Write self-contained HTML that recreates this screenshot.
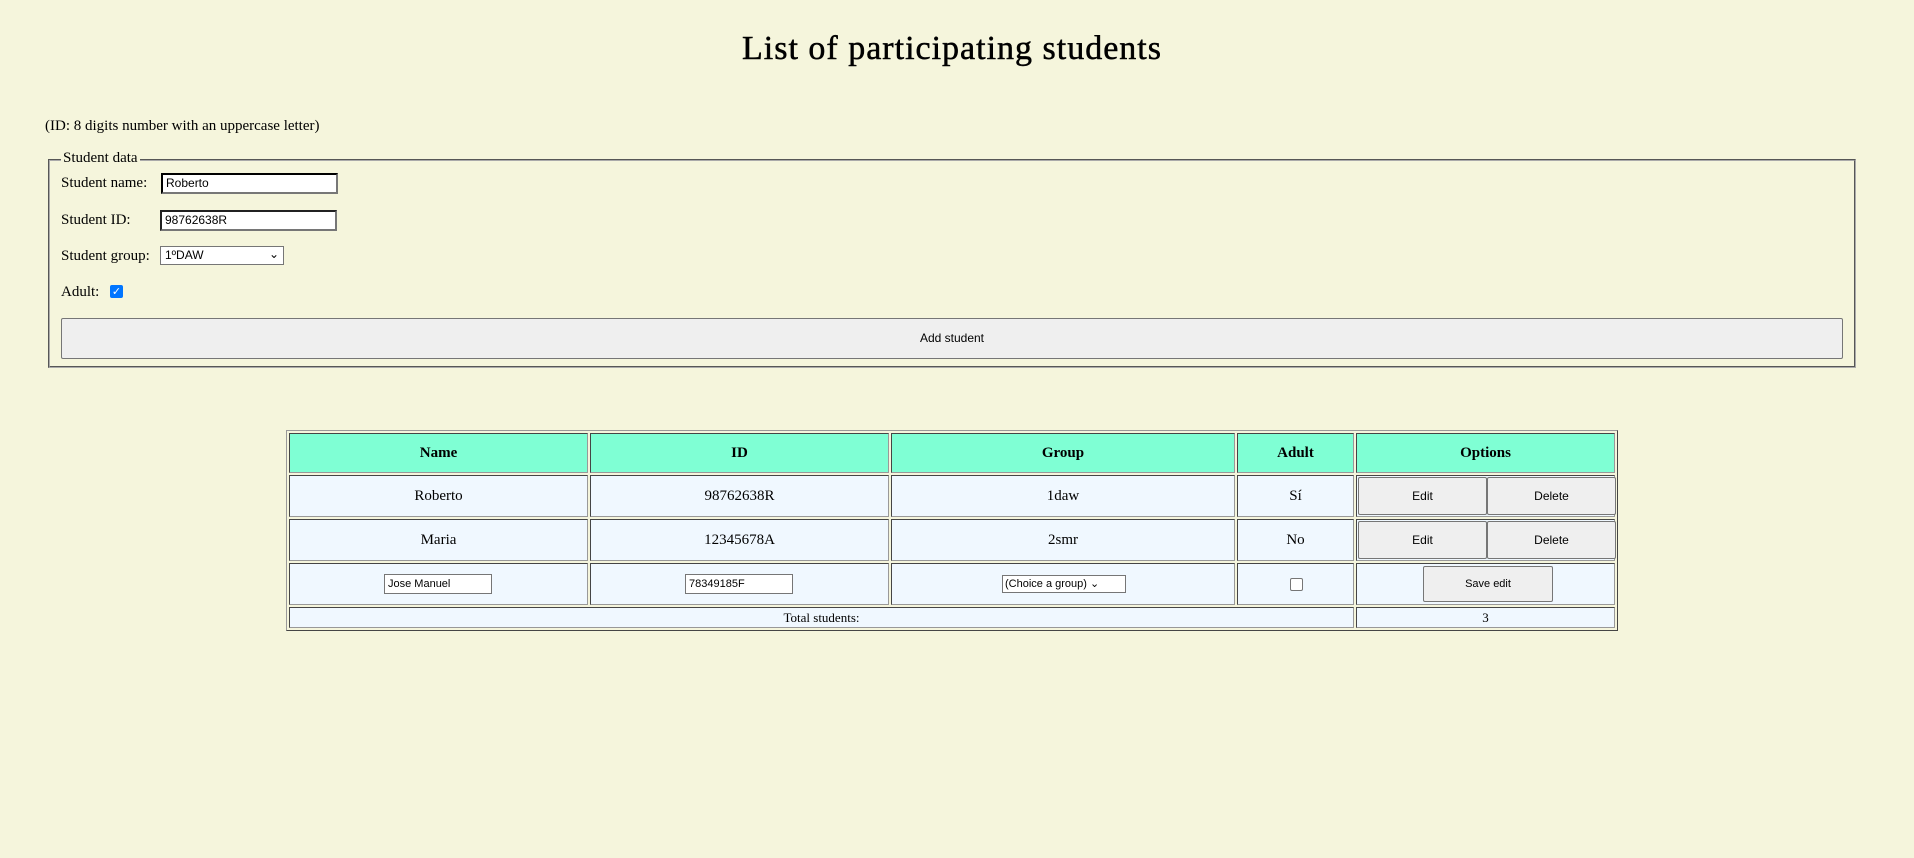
<!DOCTYPE html>
<html><head><meta charset="utf-8">
<style>
body{margin:0;background:#f5f5dc;font-family:"Liberation Serif",serif;font-size:15px;color:#000;width:1914px;height:858px;overflow:hidden;position:relative}
h1{position:absolute;top:30px;left:0;width:1904px;text-align:center;margin:0;font-size:34px;font-weight:normal;letter-spacing:1px;-webkit-text-stroke:0.5px #000}
.abs{position:absolute}
.in{position:absolute;height:21px;border:2px inset #767676;background:#fff;padding:1px 3px;font-family:"Liberation Sans",sans-serif;font-size:12px;box-sizing:border-box;line-height:15px;text-align:left}
.btn{position:absolute;background:#efefef;border:1px solid #767676;border-radius:2px;box-sizing:border-box;font-family:"Liberation Sans",sans-serif;font-size:12px;text-align:center}
table{position:absolute;left:286px;top:430px;width:1332px;border:1px outset #999;border-spacing:2px;border-collapse:separate;font-size:15px}
td,th{border:1px inset #999;text-align:center;padding:0;background:#f0f8ff}
th{background:#7fffd4;height:38px;font-weight:bold}
td{height:40px;position:relative}
</style></head><body>
<h1>List of participating students</h1>
<div class="abs" style="left:45px;top:118px">(ID: 8 digits number with an uppercase letter)</div>
<div class="abs" style="left:48px;top:159px;width:1808px;height:209px;border:2px groove #aaa;box-sizing:border-box"></div>
<div class="abs" style="left:61px;top:150px;background:#f5f5dc;padding:0 2px">Student data</div>
<div class="abs" style="left:61px;top:175px">Student name:</div>
<div class="in" style="left:161px;top:173px;width:177px;border-color:#222 #777 #777 #222">Roberto</div>
<div class="abs" style="left:61px;top:212px">Student ID:</div>
<div class="in" style="left:160px;top:210px;width:177px">98762638R</div>
<div class="abs" style="left:61px;top:248px">Student group:</div>
<div class="in" style="left:160px;top:246px;width:124px;height:19px;border:1px solid #767676;padding:1px 4px">1ºDAW<span style="position:absolute;right:4px;top:0">&#8964;</span></div>
<div class="abs" style="left:61px;top:284px">Adult:</div>
<div class="abs" style="left:110px;top:285px;width:13px;height:13px;background:#0075ff;border-radius:2px;color:#fff;font-size:11px;line-height:13px;text-align:center;font-family:'DejaVu Sans',sans-serif">✓</div>
<div class="btn" style="left:61px;top:318px;width:1782px;height:41px;line-height:39px">Add student</div>

<table>
<colgroup><col style="width:299px"><col style="width:299px"><col style="width:344px"><col style="width:117px"><col></colgroup>
<tr><th>Name</th><th>ID</th><th>Group</th><th>Adult</th><th>Options</th></tr>
<tr><td>Roberto</td><td>98762638R</td><td>1daw</td><td>Sí</td><td><div class="btn" style="left:1px;top:1px;width:129px;height:38px;line-height:36px">Edit</div><div class="btn" style="left:130px;top:1px;width:129px;height:38px;line-height:36px">Delete</div></td></tr>
<tr><td>Maria</td><td>12345678A</td><td>2smr</td><td>No</td><td><div class="btn" style="left:1px;top:1px;width:129px;height:38px;line-height:36px">Edit</div><div class="btn" style="left:130px;top:1px;width:129px;height:38px;line-height:36px">Delete</div></td></tr>
<tr><td><div class="in" style="left:94px;top:10px;width:108px;height:20px;border:1px solid #767676;font-size:11px;line-height:16px">Jose Manuel</div></td><td><div class="in" style="left:94px;top:10px;width:108px;height:20px;border:1px solid #767676;font-size:11px;line-height:16px">78349185F</div></td><td><div class="in" style="left:110px;top:11px;width:124px;height:18px;border:1px solid #767676;font-size:11px;line-height:14px;padding:1px 2px">(Choice a group) &#8964;</div></td><td><div class="abs" style="left:52px;top:14px;width:11px;height:11px;border:1px solid #767676;border-radius:2px;background:#fff"></div></td><td><div class="btn" style="left:66px;top:2px;width:130px;height:36px;line-height:34px;font-size:11px">Save edit</div></td></tr>
<tr><td colspan="4" style="height:19px;font-size:13px">Total students:</td><td style="height:19px;font-size:13px">3</td></tr>
</table>
</body></html>
